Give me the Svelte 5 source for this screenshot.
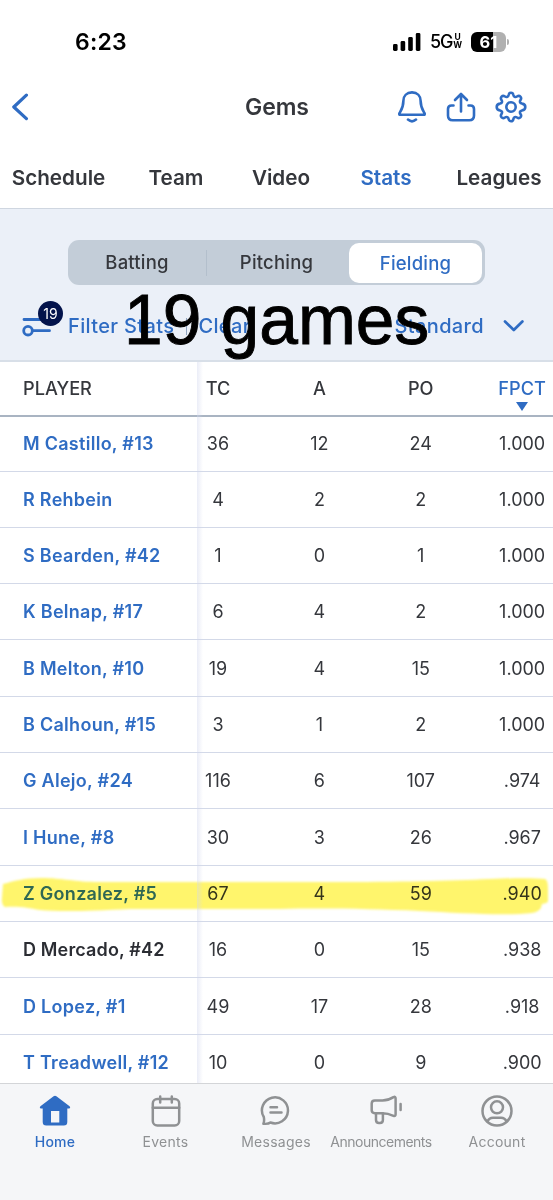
<script>
  const tabs = ['Schedule', 'Team', 'Video', 'Stats', 'Leagues'];
  const columns = ['TC', 'A', 'PO', 'FPCT'];

  const players = [
    { name: 'M Castillo, #13', stats: ['36', '12', '24', '1.000'] },
    { name: 'R Rehbein', stats: ['4', '2', '2', '1.000'] },
    { name: 'S Bearden, #42', stats: ['1', '0', '1', '1.000'] },
    { name: 'K Belnap, #17', stats: ['6', '4', '2', '1.000'] },
    { name: 'B Melton, #10', stats: ['19', '4', '15', '1.000'] },
    { name: 'B Calhoun, #15', stats: ['3', '1', '2', '1.000'] },
    { name: 'G Alejo, #24', stats: ['116', '6', '107', '.974'] },
    { name: 'I Hune, #8', stats: ['30', '3', '26', '.967'] },
    { name: 'Z Gonzalez, #5', stats: ['67', '4', '59', '.940'], marked: true },
    { name: 'D Mercado, #42', stats: ['16', '0', '15', '.938'], plain: true },
    { name: 'D Lopez, #1', stats: ['49', '17', '28', '.918'] },
    { name: 'T Treadwell, #12', stats: ['10', '0', '9', '.900'] }
  ];

  let activeTab = $state('Stats');
</script>

<div class="app">
  <div class="status">
    <span class="time">6:23</span>
    <div class="status-right">
      <svg width="28" height="18" viewBox="0 0 28 18">
        <rect x="0" y="11" width="4.6" height="7" rx="1.4" />
        <rect x="7.6" y="8" width="4.6" height="10" rx="1.4" />
        <rect x="15.2" y="4" width="4.6" height="14" rx="1.4" />
        <rect x="22.8" y="0" width="4.6" height="18" rx="1.4" />
      </svg>
      <span class="net">5G</span>
      <span class="uw"><i>U</i><i>W</i></span>
      <div class="battery"><span>61</span></div>
      <div class="nub"></div>
    </div>
  </div>

  <header>
    <svg class="back" width="19" height="28" viewBox="0 0 19 28">
      <path d="M16.4 2.2 L3.8 14 L16.4 25.6" fill="none" stroke="#2f6cc3" stroke-width="3.2" stroke-linecap="round" stroke-linejoin="round" />
    </svg>
    <h1>Gems</h1>
    <div class="actions">
      <svg width="30" height="34" viewBox="0 0 30 34">
        <path d="M15 2.4 C9.6 2.4 6.4 6 6.4 10.8 C6.4 17.2 5 19 2.6 23 Q1.6 24.8 3.4 24.8 H26.6 Q28.4 24.8 27.4 23 C25 19 23.6 17.2 23.6 10.8 C23.6 6 20.4 2.4 15 2.4 Z" />
        <path d="M11 29.6 Q15 33 19 29.6" />
      </svg>
      <svg width="30" height="34" viewBox="0 0 30 34">
        <path d="M7.5 15.5 H5.5 Q2 15.5 2 19 V25.5 Q2 30.2 6.7 30.2 H23.3 Q28 30.2 28 25.5 V19 Q28 15.5 24.5 15.5 H22.5" />
        <path d="M15 21.5 V4 M9 10 L15 4 L21 10" />
      </svg>
      <svg width="32" height="34" viewBox="0 0 32 34">
        <path d="M13.6 5 Q14 2.7 16 2.7 T18.4 5 Q18.7 6.4 19.7 6.9 Q20.8 7.3 22 6.5 Q24 5.2 25.4 6.6 T25.5 10 Q24.7 11.2 25.1 12.3 Q25.6 13.3 27 13.6 Q30.3 14 30.3 17 T27 20.4 Q25.6 20.7 25.1 21.7 Q24.7 22.8 25.5 24 Q26.8 26 25.4 27.4 T22 27.5 Q20.8 26.7 19.7 27.1 Q18.7 27.6 18.4 29 Q18 31.3 16 31.3 T13.6 29 Q13.3 27.6 12.3 27.1 Q11.2 26.7 10 27.5 Q8 28.8 6.6 27.4 T6.5 24 Q7.3 22.8 6.9 21.7 Q6.4 20.7 5 20.4 Q1.7 20 1.7 17 T5 13.6 Q6.4 13.3 6.9 12.3 Q7.3 11.2 6.5 10 Q5.2 8 6.6 6.6 T10 6.5 Q11.2 7.3 12.3 6.9 Q13.3 6.4 13.6 5 Z" />
        <circle cx="16" cy="17" r="4.7" />
      </svg>
    </div>
  </header>

  <nav class="tabs">
    {#each tabs as tab}
      <button class:active={activeTab === tab} onclick={() => (activeTab = tab)}>{tab}</button>
    {/each}
  </nav>

  <section class="filters">
    <div class="segments">
      <span class="segment">Batting</span>
      <span class="divider"></span>
      <span class="segment pitching">Pitching</span>
      <span class="segment selected">Fielding</span>
    </div>
    <div class="filter-row">
      <div class="filter-icon">
        <svg width="30" height="22" viewBox="0 0 30 22">
          <path d="M2 4.5 H27 M11 15.7 H27.5" />
          <circle cx="6" cy="15.7" r="4.3" />
        </svg>
        <span class="badge">19</span>
      </div>
      <span class="filter-label">Filter Stats</span>
      <span class="pipe"></span>
      <span class="clear">Clear</span>
      <span class="standard">Standard</span>
      <svg class="chevron" width="22" height="14" viewBox="0 0 22 14">
        <path d="M2 2.5 L10.8 11 L19.4 2.5" />
      </svg>
    </div>
    <div class="note">19 games</div>
  </section>

  <div class="table">
    <div class="row head">
      <div class="player">PLAYER</div>
      {#each columns as column}
        <div class="cell" class:sorted={column === 'FPCT'}>{column}</div>
      {/each}
    </div>
    {#each players as player}
      <div class="row">
        <div class="player" class:plain={player.plain}>{player.name}</div>
        {#each player.stats as value}
          <div class="cell">{value}</div>
        {/each}
        {#if player.marked}
          <svg class="marker" width="553" height="44" viewBox="0 0 553 44">
            <path d="M3 10 C14 7 24 4 42 4 C62 4 74 8 100 8 H330 C400 8 450 7 490 5 C515 4 535 4 545 5 Q548 6 548 15 V27 Q548 29 542 30 Q541 38 532 39 C505 42 460 39 420 37 C370 35 330 34 280 35 H130 C90 37 60 38 40 36 C28 34 20 32 5 33 Q1 31 2 23 Z" />
          </svg>
        {/if}
      </div>
    {/each}
    <div class="edge"></div>
  </div>

  <footer>
    <div class="item home">
      <svg width="32" height="32" viewBox="0 0 32 32">
        <path d="M14.6 1.2 Q16 .2 17.4 1.2 L30.6 11.2 Q32 13.2 30 13.6 H28.3 V27 Q28.3 30.5 24.8 30.5 H7.2 Q3.7 30.5 3.7 27 V13.6 H2 Q0 13.2 1.4 11.2 Z M12 16 V27.5 H20.3 V16 Z" fill-rule="evenodd" />
      </svg>
      <span>Home</span>
    </div>
    <div class="item">
      <svg width="32" height="32" viewBox="0 0 32 32">
        <rect x="2.8" y="4" width="26.4" height="26.5" rx="4.5" />
        <path d="M2.8 12.8 H29.2 M10.2 1.4 V7.5 M21.8 1.4 V7.5" />
      </svg>
      <span>Events</span>
    </div>
    <div class="item">
      <svg width="32" height="32" viewBox="0 0 32 32">
        <path d="M3.4 28.8 Q4.6 26 3.8 22 A13 13 0 1 1 10.4 27.5 Q8.5 29.2 3.4 28.8 Z M10.5 12.3 H17 M10.5 17.6 H21.5" />
      </svg>
      <span>Messages</span>
    </div>
    <div class="item tight">
      <svg width="32" height="32" viewBox="0 0 32 32">
        <path d="M4.8 5.5 H12.5 C17 5.5 20.2 4.2 23.5 2.1 Q25.6 1.2 25.6 3.4 V19.2 Q25.6 21.6 23.5 20.8 C20 19.2 17 18.2 12.5 18.2 H4.8 Q1.7 18.2 1.7 15.2 V8.5 Q1.7 5.5 4.8 5.5 Z M6 18.2 V25 Q6 28 9 28 H9.9 Q12.9 28 12.9 25 V18.2 M30.6 9 V15" />
      </svg>
      <span>Announcements</span>
    </div>
    <div class="item">
      <svg width="32" height="32" viewBox="0 0 32 32">
        <circle cx="16" cy="16" r="14.5" />
        <circle cx="16" cy="12.3" r="6" />
        <path d="M6.5 26.5 Q8 22.7 12 22.7 H20 Q24 22.7 25.5 26.5" />
      </svg>
      <span>Account</span>
    </div>
  </footer>
</div>

<style>
  :global(body) {
    margin: 0;
    background: #fff;
  }

  .app {
    display: flex;
    flex-direction: column;
    width: 553px;
    height: 1200px;
    overflow: hidden;
    color: #35373c;
    font-family: Inter, 'Liberation Sans', sans-serif;
    white-space: nowrap;
  }

  .status {
    display: flex;
    justify-content: space-between;
    align-items: center;
    box-sizing: border-box;
    height: 83px;
    padding: 0 44px 0 75px;
    color: #000;
  }

  .time {
    font-size: 23px;
    font-weight: 600;
    letter-spacing: 0.2px;
  }

  .status-right {
    display: flex;
    align-items: center;
  }

  .net {
    margin-left: 9px;
    font-size: 18px;
    font-weight: 500;
    letter-spacing: -1.2px;
  }

  .uw {
    display: flex;
    flex-direction: column;
    align-items: center;
    margin-left: 1px;
    font-size: 8.5px;
    font-weight: 700;
    line-height: 7.5px;
  }

  .uw i {
    font-style: normal;
  }

  .battery {
    width: 35px;
    height: 20px;
    margin-left: 9px;
    border-radius: 6px;
    background: linear-gradient(to right, #000 62%, #b0b0b0 62%);
    color: #fff;
    font-size: 16.5px;
    font-weight: 700;
    line-height: 20px;
    text-align: center;
  }

  .nub {
    width: 2px;
    height: 6px;
    margin-left: 1px;
    border-radius: 0 2px 2px 0;
    background: #b0b0b0;
  }

  header {
    display: grid;
    grid-template-columns: 1fr auto 1fr;
    align-items: center;
    height: 48px;
    padding: 0 26px 0 11px;
  }

  .back {
    margin-left: -1px;
  }

  h1 {
    margin: 0 0 0 16px;
    font-size: 23px;
    font-weight: 600;
    letter-spacing: -0.1px;
  }

  .actions {
    display: flex;
    justify-content: flex-end;
    gap: 19px;
  }

  .actions svg,
  .filter-icon svg,
  .chevron {
    fill: none;
    stroke: #2f6cc3;
    stroke-width: 2.6;
    stroke-linecap: round;
    stroke-linejoin: round;
  }

  .tabs {
    display: grid;
    grid-template-columns: 117px 118px 92px 118px 108px;
    height: 77px;
    border-bottom: 1px solid #cfd6e0;
  }

  .tabs button {
    position: relative;
    padding: 0;
    border: 0;
    background: none;
    color: inherit;
    font: 570 20.7px/94px Inter, 'Liberation Sans', sans-serif;
  }

  .tabs .active {
    color: #2f6cc3;
  }

  .tabs .active::after {
    position: absolute;
    right: 13px;
    bottom: 0;
    left: 13px;
    height: 3px;
    background: #2f6cc3;
    content: '';
  }

  .filters {
    position: relative;
    box-sizing: border-box;
    height: 153px;
    padding-top: 31px;
    border-bottom: 2px solid #d8dfe8;
    background: #ebf0f8;
  }

  .segments {
    display: flex;
    align-items: center;
    box-sizing: border-box;
    width: 417px;
    height: 45px;
    margin-left: 68px;
    padding: 2px;
    border-radius: 11px;
    background: #c3cdd8;
    font-size: 18.5px;
    font-weight: 550;
    letter-spacing: 0.2px;
    line-height: 41px;
    text-align: center;
  }

  .segment {
    width: 136px;
  }

  .segment:first-child {
    width: 134px;
    padding-right: 2px;
  }

  .divider {
    width: 1px;
    height: 26px;
    background: #b3bfcc;
  }

  .pitching {
    width: 139px;
    padding-right: 3px;
  }

  .selected {
    width: 133px;
    border-radius: 10px;
    background: #fff;
    color: #2f6cc3;
    line-height: 40px;
  }

  .filter-row {
    display: flex;
    align-items: center;
    height: 40px;
    margin-top: 21px;
    padding: 0 28px 0 22px;
    color: #2f6cc3;
    font-size: 20px;
    font-weight: 450;
    letter-spacing: 0.35px;
  }

  .filter-icon {
    position: relative;
    height: 22px;
  }

  .filter-icon svg {
    stroke-width: 2.8;
  }

  .badge {
    position: absolute;
    top: -14px;
    left: 16px;
    width: 25px;
    height: 25px;
    border-radius: 50%;
    background: #03134b;
    color: #fff;
    font-size: 14px;
    font-weight: 400;
    letter-spacing: 0;
    line-height: 25px;
    text-align: center;
  }

  .filter-label {
    margin-left: 16px;
  }

  .pipe {
    width: 1px;
    height: 17px;
    margin: 0 11px 0 12px;
    background: #8fa4c0;
  }

  .standard {
    margin-left: auto;
  }

  .chevron {
    margin-left: 19px;
    stroke-width: 2.7;
  }

  .note {
    position: absolute;
    top: 71px;
    left: 124px;
    color: #000;
    font-family: 'Liberation Sans', Arial, sans-serif;
    font-size: 69.5px;
    line-height: 80px;
    -webkit-text-stroke: 0.9px #000;
  }

  .table {
    position: relative;
    height: 721px;
    overflow: hidden;
  }

  .row {
    position: relative;
    display: grid;
    grid-template-columns: 167.3px repeat(4, 101.4px);
    align-items: center;
    box-sizing: border-box;
    width: 573px;
    height: 56.34px;
    border-bottom: 1px solid #d3d9e8;
    font-size: 18px;
  }

  .row.head {
    height: 54.5px;
    border-bottom: 2px solid #a9b4c2;
    font-size: 18.2px;
    font-weight: 550;
  }

  .row.head + .row {
    height: 55px;
  }

  .player {
    padding-left: 23px;
    color: #2f6cc3;
    font-weight: 580;
    letter-spacing: 0.28px;
  }

  .head .player {
    color: inherit;
    font-weight: 550;
    letter-spacing: 0;
  }

  .player.plain {
    color: #2b2d33;
    letter-spacing: 0.15px;
  }

  .cell {
    position: relative;
    text-align: center;
  }

  .sorted {
    color: #2f6cc3;
  }

  .sorted::after {
    position: absolute;
    top: 25px;
    left: 45px;
    border: 6px solid transparent;
    border-top: 9px solid #2f6cc3;
    border-bottom: 0;
    content: '';
  }

  .marker {
    position: absolute;
    top: 8px;
    left: 0;
    fill: #fff56c;
    filter: blur(0.8px);
    mix-blend-mode: multiply;
  }

  .edge {
    position: absolute;
    top: 0;
    bottom: 0;
    left: 197px;
    width: 6px;
    background: linear-gradient(to right, rgba(210, 215, 238, 0.45), rgba(225, 229, 244, 0));
  }

  footer {
    display: grid;
    grid-template-columns: 110px 111px 110px 100px 122px;
    flex: 1;
    border-top: 1px solid #d3d5d8;
    background: #f5f6f8;
    color: #8f9193;
  }

  .item {
    display: flex;
    flex-direction: column;
    align-items: center;
    padding-top: 10.5px;
    font-size: 14px;
  }

  .item:last-child {
    padding-left: 10px;
  }

  .item svg {
    fill: none;
    stroke: currentColor;
    stroke-width: 2.5;
    stroke-linecap: round;
    stroke-linejoin: round;
  }

  .item.tight svg {
    margin-left: 10px;
  }

  .item span {
    margin-top: 6.5px;
    letter-spacing: 0.25px;
    line-height: 18px;
  }

  .item.tight span {
    letter-spacing: -0.5px;
  }

  .item.home {
    color: #2f6cc3;
    font-weight: 500;
  }

  .home svg {
    fill: currentColor;
    stroke: none;
  }
</style>
